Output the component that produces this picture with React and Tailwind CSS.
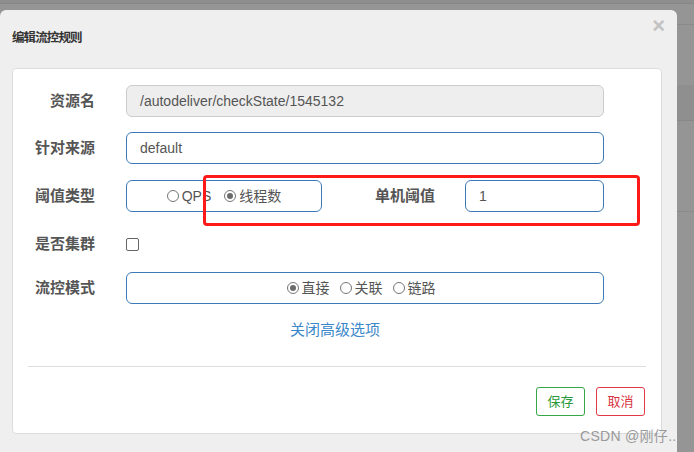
import React from 'react';

const font = { fontFamily: '"Liberation Sans", "Noto Sans CJK SC", sans-serif' };

function Radio({ checked, label }) {
  return (
    <span className="flex items-center">
      <span className="w-[12px] h-[12px] rounded-full border border-[#767676] bg-white flex items-center justify-center">
        {checked && <span className="w-[6px] h-[6px] rounded-full bg-[#6b6b6b]" />}
      </span>
      <span className="ml-[3px] text-[14px] text-[#555]">{label}</span>
    </span>
  );
}

function Label({ children }) {
  return (
    <div className="w-[82px] text-right text-[15px] font-bold text-[#555] leading-5 shrink-0">{children}</div>
  );
}

export default function App() {
  return (
    <div style={font} className="relative w-[694px] h-[452px] overflow-hidden bg-[#959595] flex flex-col">
      <div className="h-[4px] bg-[#8e8e8e] border-b border-[#868686] shrink-0" />
      <div className="h-[6px] shrink-0" />
      <div className="flex flex-1 min-h-0">
        <div className="w-[677px] shrink-0 bg-[#efefef] rounded-t-[6px] flex flex-col">
          <div className="h-[58px] flex justify-between items-start pl-3 pr-[12px]">
            <h4 className="mt-[18px] text-[12.5px] tracking-[-0.9px] font-bold text-[#333] leading-5">编辑流控规则</h4>
            <span className="mt-[2px] text-[22px] font-bold text-[#c2c2c2] leading-7">×</span>
          </div>
          <div className="ml-3 w-[650px] bg-white border border-[#dcdcdc] rounded-[4px] pt-[16px] pb-[17px]">
            <div className="flex items-center h-8">
              <Label>资源名</Label>
              <div className="ml-[31px] w-[478px] h-8 rounded-[6px] border border-[#cccccc] bg-[#eeeeee] flex items-center px-[13px] text-[14px] text-[#555]">
                /autodeliver/checkState/1545132
              </div>
            </div>
            <div className="flex items-center h-8 mt-[15px]">
              <Label>针对来源</Label>
              <div className="ml-[31px] w-[478px] h-8 rounded-[6px] border border-[#3d7ab8] bg-white flex items-center px-[13px] text-[14px] text-[#555]">
                default
              </div>
            </div>
            <div className="flex items-center h-8 mt-[16px]">
              <Label>阈值类型</Label>
              <div className="ml-[31px] w-[196px] h-8 rounded-[6px] border border-[#3d7ab8] bg-white flex items-center justify-center gap-[13px]">
                <Radio label="QPS" />
                <Radio checked label="线程数" />
              </div>
              <div className="w-[113px] text-right text-[15px] font-bold text-[#555]">单机阈值</div>
              <div className="ml-[30px] w-[139px] h-8 rounded-[6px] border border-[#3d7ab8] bg-white flex items-center px-[13px] text-[14px] text-[#555]">
                1
              </div>
            </div>
            <div className="flex items-center h-8 mt-[16px]">
              <Label>是否集群</Label>
              <span className="ml-[31px] w-[13px] h-[13px] rounded-[2px] border border-[#666] bg-white" />
            </div>
            <div className="flex items-center h-8 mt-[12px]">
              <Label>流控模式</Label>
              <div className="ml-[31px] w-[478px] h-8 rounded-[6px] border border-[#3d7ab8] bg-white flex items-center justify-center gap-[10px] pr-[8px]">
                <Radio checked label="直接" />
                <Radio label="关联" />
                <Radio label="链路" />
              </div>
            </div>
            <div className="mt-[16px] text-center text-[15px] leading-5 text-[#3a87c9] pr-[4px]">关闭高级选项</div>
            <div className="mt-[26px] mx-[15px] border-t border-[#dedede]" />
            <div className="mt-[20px] flex justify-end gap-[11px] pr-[16px]">
              <button className="w-[49px] h-[29px] rounded-[3px] border border-[#34a846] text-[#2a9a3c] text-[13px] bg-white">保存</button>
              <button className="w-[49px] h-[29px] rounded-[3px] border border-[#dd3a45] text-[#d9343f] text-[13px] bg-white">取消</button>
            </div>
          </div>
        </div>
        <div className="flex-1 flex flex-col">
          <div className="h-[14px]" />
          <div className="h-px bg-[#8a8a8a]" />
          <div className="h-[60px]" />
          <div className="h-[36px] bg-[#8f8f8f] border-b border-[#888]" />
          <div className="h-[90px]" />
          <div className="h-px bg-[#8a8a8a]" />
        </div>
      </div>
      <div className="absolute left-[203px] top-[175px] w-[437px] h-[51px] border-[3px] border-[#ff1a1a] rounded-[4px]" />
      <div className="absolute left-[580px] top-[426px] text-[14px] text-[#9a9a9a] tracking-[0.3px]">CSDN @刚仔...</div>
    </div>
  );
}
